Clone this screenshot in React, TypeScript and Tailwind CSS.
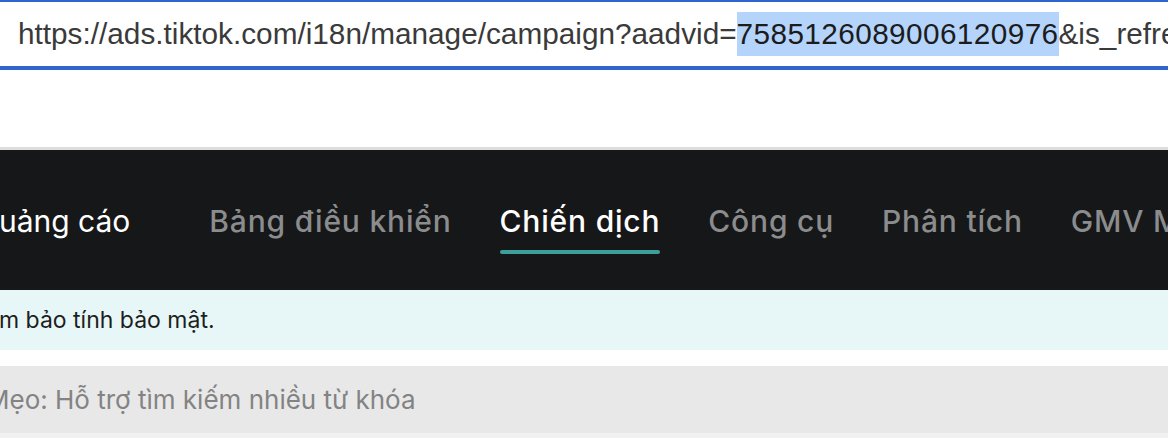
export default function App() {
  const navItems = ["Bảng điều khiển", "Chiến dịch", "Công cụ", "Phân tích", "GMV Max"];
  const active = "Chiến dịch";

  return (
    <div className="w-[1168px] h-[438px] overflow-hidden bg-white flex flex-col font-['Inter','Noto_Sans',sans-serif]">
      {/* address bar */}
      <div className="h-[70px] shrink-0 border-t-2 border-b-4 border-[#2f65cf] flex items-center pl-[18px] whitespace-nowrap overflow-hidden font-['Liberation_Sans',Arial,sans-serif] text-[29.75px] text-[#3a3a3a]">
        <span>https://ads.tiktok.com/i18n/manage/campaign?aadvid=</span>
        <span className="bg-[#b5d4fc] text-[#1c1c1c] tracking-[0.4px]">7585126089006120976</span>
        <span>&amp;is_refresh=1</span>
      </div>
      <div className="h-[77px] shrink-0 bg-white" />
      <div className="h-[3px] shrink-0 bg-[#dddddd]" />

      {/* top nav */}
      <nav className="h-[140px] shrink-0 bg-[#161718] flex items-start pt-[53px] whitespace-nowrap overflow-hidden">
        <div className="text-[30px] leading-9 text-white -ml-[24px] mr-[79px]">Quảng cáo</div>
        <div className="flex gap-[48px]">
          {navItems.map((item) => (
            <div key={item} className="flex flex-col items-stretch">
              <span className={`text-[30px] leading-9 tracking-[0.8px] font-medium ${item === active ? "text-white" : "text-[#8b8c8d]"}`}>
                {item}
              </span>
              <div className={`mt-[11px] h-[4px] rounded-full ${item === active ? "bg-[#3d9f99]" : "bg-transparent"}`} />
            </div>
          ))}
        </div>
      </nav>

      {/* notice */}
      <div className="h-[60px] shrink-0 bg-[#e7f7f7] flex items-center whitespace-nowrap overflow-hidden">
        <span className="text-[23px] text-[#1e1e1e] -ml-[28px]">đảm bảo tính bảo mật.</span>
      </div>
      <div className="h-[16px] shrink-0 bg-white" />

      {/* search */}
      <div className="h-[67px] shrink-0 bg-[#e8e8e8] flex items-center whitespace-nowrap overflow-hidden">
        <span className="text-[26px] text-[#838383] -ml-[14px]">Mẹo: Hỗ trợ tìm kiếm nhiều từ khóa</span>
      </div>
      <div className="flex-1 bg-[#f1f1f1]" />
    </div>
  );
}
